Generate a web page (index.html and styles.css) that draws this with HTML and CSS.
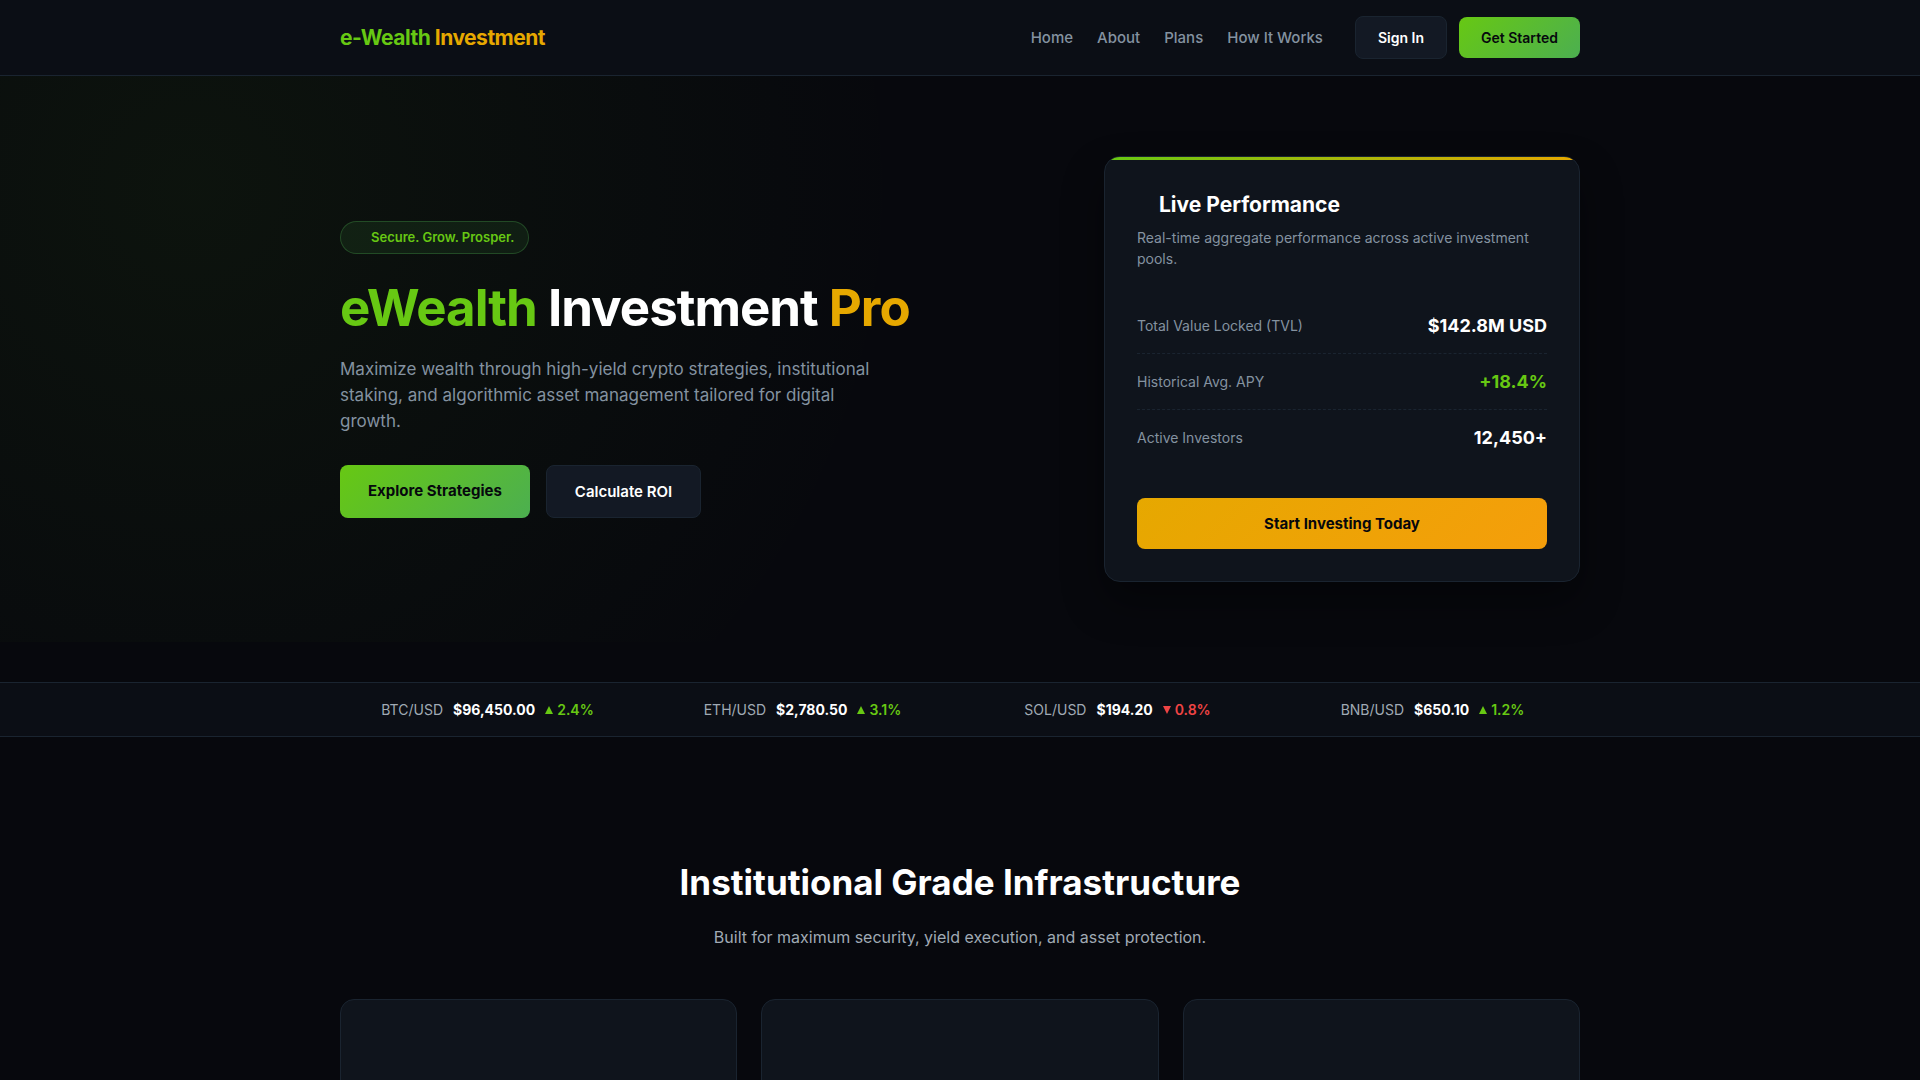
FILE: index.html
```html
<!DOCTYPE html>
<html lang="en">
<head>
  <meta charset="UTF-8">
  <meta name="viewport" content="width=device-width, initial-scale=1.0">
  <title>e-Wealth Investment</title>
  <link rel="stylesheet" href="styles.css">
</head>
<body>
  <header class="header">
    <div class="container nav">
      <a href="#" class="logo">e-Wealth <span>Investment</span></a>
      <div class="nav-right">
        <nav class="nav-links">
          <a href="#home">Home</a>
          <a href="#about">About</a>
          <a href="#plans">Plans</a>
          <a href="#how">How It Works</a>
        </nav>
        <div class="nav-actions">
          <a href="#login" class="btn btn-small btn-secondary">Sign In</a>
          <a href="#register" class="btn btn-small btn-primary">Get Started</a>
        </div>
      </div>
    </div>
  </header>

  <section class="hero" id="home">
    <div class="container hero-grid">
      <div>
        <div class="badge">Secure. Grow. Prosper.</div>
        <h1><span class="green">eWealth</span> Investment <span class="gold">Pro</span></h1>
        <p class="hero-text">Maximize wealth through high-yield crypto strategies, institutional staking, and algorithmic asset management tailored for digital growth.</p>
        <div class="hero-actions">
          <a href="#plans" class="btn btn-primary btn-bold">Explore Strategies</a>
          <a href="#calculator" class="btn btn-secondary">Calculate ROI</a>
        </div>
      </div>

      <div class="card">
        <h2 class="card-title">Live Performance</h2>
        <p class="card-text">Real-time aggregate performance across active investment pools.</p>
        <div class="stats">
          <div class="stat"><span>Total Value Locked (TVL)</span><strong>$142.8M USD</strong></div>
          <div class="stat"><span>Historical Avg. APY</span><strong class="green">+18.4%</strong></div>
          <div class="stat"><span>Active Investors</span><strong>12,450+</strong></div>
        </div>
        <a href="#register" class="btn btn-gold btn-bold">Start Investing Today</a>
      </div>
    </div>
  </section>

  <div class="ticker">
    <div class="container ticker-grid">
      <div class="tick"><span>BTC/USD</span><strong>$96,450.00</strong><span class="change up"><svg viewBox="0 0 8 8"><path d="M4 0L8 8H0Z"/></svg>2.4%</span></div>
      <div class="tick"><span>ETH/USD</span><strong>$2,780.50</strong><span class="change up"><svg viewBox="0 0 8 8"><path d="M4 0L8 8H0Z"/></svg>3.1%</span></div>
      <div class="tick"><span>SOL/USD</span><strong>$194.20</strong><span class="change down"><svg viewBox="0 0 8 8"><path d="M0 0H8L4 8Z"/></svg>0.8%</span></div>
      <div class="tick"><span>BNB/USD</span><strong>$650.10</strong><span class="change up"><svg viewBox="0 0 8 8"><path d="M4 0L8 8H0Z"/></svg>1.2%</span></div>
    </div>
  </div>

  <section class="section" id="about">
    <div class="container">
      <h2 class="section-title">Institutional Grade Infrastructure</h2>
      <p class="section-text">Built for maximum security, yield execution, and asset protection.</p>
      <div class="features">
        <div class="feature"></div>
        <div class="feature"></div>
        <div class="feature"></div>
      </div>
    </div>
  </section>
</body>
</html>
```
FILE: styles.css
```css
:root {
  --bg: #07080d;
  --bar: #0b0e15;
  --panel: #0f141c;
  --raised: #131924;
  --border: #1a2430;
  --green: #67c813;
  --gold: #e6a800;
  --red: #ef4444;
  --muted: #8492a0;
  --soft: #a0aab4;
}

* {
  margin: 0;
  padding: 0;
  box-sizing: border-box;
}
body {
  font-family: Inter, "Liberation Sans", sans-serif;
  font-size: 16px;
  line-height: 26px;
  background: var(--bg);
  color: #fff;
  overflow-x: hidden;
}
a {
  color: inherit;
  text-decoration: none;
}
.container {
  max-width: 1280px;
  margin: 0 auto;
  padding: 0 20px;
}
.green { color: var(--green); }
.gold { color: var(--gold); }

/* Buttons */
.btn {
  display: block;
  padding: 14px 28px;
  border-radius: 8px;
  font-size: 15px;
  font-weight: 600;
  line-height: 23px;
  text-align: center;
}
.btn-small {
  padding: 10px 22px;
  font-size: 14px;
  line-height: 21px;
}
.btn-bold { font-weight: 700; }
.btn-primary {
  background: linear-gradient(135deg, var(--green), #4caf50);
  color: #06080d;
}
.btn-secondary {
  background: var(--raised);
  border: 1px solid var(--border);
}
.btn-gold {
  background: linear-gradient(135deg, var(--gold), #f59e0b);
  color: #06080d;
}

/* Header */
.header {
  background: var(--bar);
  border-bottom: 1px solid var(--border);
  padding: 16px 0;
}
.nav, .nav-right, .nav-links, .nav-actions {
  display: flex;
  align-items: center;
}
.nav { justify-content: space-between; }
.nav-right { gap: 32px; }
.nav-links {
  gap: 24px;
  color: var(--muted);
  font-size: 15px;
  font-weight: 500;
}
.nav-actions { gap: 12px; }
.logo {
  color: var(--green);
  font-size: 21px;
  font-weight: 700;
  letter-spacing: -0.5px;
}
.logo span { color: var(--gold); }

/* Hero */
.hero {
  padding: 80px 0 60px;
  background: radial-gradient(circle at 10% 20%, rgba(103, 200, 19, 0.06), transparent 40%);
}
.hero-grid {
  display: grid;
  grid-template-columns: 1.2fr 0.8fr;
  gap: 50px;
  align-items: center;
}
.badge {
  display: inline-block;
  vertical-align: top;
  padding: 5px 14px 5px 30px;
  margin-bottom: 24px;
  border: 1px solid rgba(76, 175, 80, 0.3);
  border-radius: 20px;
  background: rgba(76, 175, 80, 0.1);
  color: var(--green);
  font-size: 13px;
  font-weight: 600;
  line-height: 21px;
}
h1 {
  margin-bottom: 18px;
  font-size: 51px;
  font-weight: 700;
  line-height: 60px;
  letter-spacing: -1px;
}
.hero-text {
  max-width: 540px;
  margin-bottom: 31px;
  color: var(--muted);
  font-size: 17px;
}
.hero-actions {
  display: flex;
  gap: 16px;
}

/* Performance card */
.card {
  position: relative;
  overflow: hidden;
  padding: 32px;
  background: var(--panel);
  border: 1px solid var(--border);
  border-radius: 16px;
  box-shadow: 0 20px 40px rgba(0, 0, 0, 0.4);
}
.card::before {
  content: "";
  position: absolute;
  top: 0;
  left: 0;
  right: 0;
  height: 3px;
  background: linear-gradient(90deg, var(--green), var(--gold));
}
.card-title {
  padding-left: 22px;
  margin-bottom: 6px;
  font-size: 21px;
  line-height: 32px;
}
.card-text {
  margin-bottom: 29px;
  color: var(--muted);
  font-size: 14px;
  line-height: 21px;
}
.stats { margin-bottom: 33px; }
.stat {
  display: flex;
  justify-content: space-between;
  align-items: center;
  padding: 14px 0;
  border-bottom: 1px dashed var(--border);
  color: var(--muted);
  font-size: 14px;
  line-height: 27px;
}
.stat:last-child { border-bottom: none; }
.stat strong {
  color: #fff;
  font-size: 18px;
}
.stat .green { color: var(--green); }

/* Ticker */
.ticker {
  margin: 40px 0;
  padding: 16px 0;
  background: var(--bar);
  border-top: 1px solid var(--border);
  border-bottom: 1px solid var(--border);
}
.ticker-grid {
  display: grid;
  grid-template-columns: repeat(4, 1fr);
  gap: 20px;
}
.tick {
  display: flex;
  justify-content: center;
  gap: 10px;
  color: var(--soft);
  font-size: 14px;
  line-height: 21px;
}
.tick strong { color: #fff; }
.change {
  display: flex;
  align-items: center;
  gap: 4px;
  font-weight: 600;
}
.change svg {
  width: 8px;
  height: 8px;
  fill: currentColor;
}
.up { color: var(--green); }
.down { color: var(--red); }

/* Features */
.section {
  padding: 80px 0;
  text-align: center;
}
.section-title {
  margin-bottom: 17px;
  font-size: 35px;
  line-height: 50px;
}
.section-text {
  margin-bottom: 49px;
  color: var(--soft);
}
.features {
  display: grid;
  grid-template-columns: repeat(3, 1fr);
  gap: 24px;
}
.feature {
  min-height: 240px;
  padding: 32px;
  background: var(--panel);
  border: 1px solid var(--border);
  border-radius: 14px;
}
```
